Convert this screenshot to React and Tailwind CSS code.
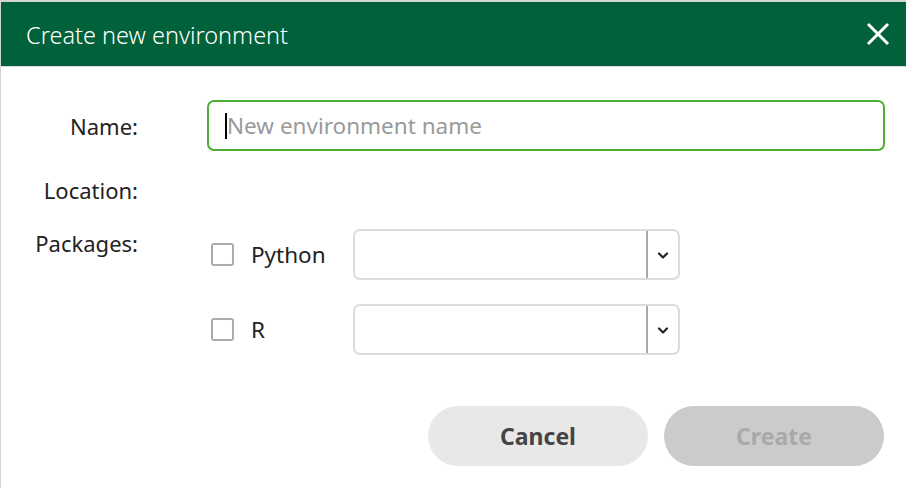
import React from 'react';

function Chevron() {
  return (
    <svg width="14" height="14" viewBox="0 0 14 14" fill="none">
      <path d="M3 5.5 L7 9.5 L11 5.5" stroke="#222" strokeWidth="2.2" strokeLinecap="round" strokeLinejoin="round" />
    </svg>
  );
}

function Select() {
  return (
    <div className="flex h-[51px] w-[327px] items-stretch rounded-[7px] border-2 border-[#dcdcdc] bg-white">
      <div className="flex-1" />
      <div className="w-[2px] bg-[#a9a9a9]" />
      <div className="flex w-[30px] items-center justify-center">
        <Chevron />
      </div>
    </div>
  );
}

function PackageRow({ label }) {
  return (
    <div className="flex h-[51px] items-center">
      <div className="ml-[4px] h-[23px] w-[23px] rounded-[3px] border-2 border-[#acacac] bg-white" />
      <span className="ml-[17px] w-[102px] text-[22.5px] text-[#222]">{label}</span>
      <Select />
    </div>
  );
}

export default function App() {
  return (
    <div
      className="flex h-[488px] w-[906px] flex-col overflow-hidden border-l border-t-2 border-[#d4d4d4] bg-white"
      style={{ fontFamily: '"Noto Sans", "Open Sans", sans-serif' }}
    >
      {/* header */}
      <div className="flex h-[65px] shrink-0 items-center justify-between border-b border-[#d9d9d9] bg-[#00613a] pl-[25px] pr-[16px]">
        <h1 className="pt-[3px] text-[23.5px] font-light text-white">Create new environment</h1>
        <svg width="24" height="24" viewBox="0 0 24 24" fill="none">
          <path d="M2 2 L22 22 M22 2 L2 22" stroke="white" strokeWidth="3" />
        </svg>
      </div>

      {/* form */}
      <div className="flex flex-1 flex-col pt-[33px]">
        <div className="flex h-[51px] items-center">
          <div className="w-[137px] pt-[1px] text-right text-[22px] text-[#222]">Name:</div>
          <div className="ml-[69px] flex h-[51px] w-[678px] items-center rounded-[7px] border-2 border-[#4caf34] pl-[16px]">
            <div className="h-[26px] w-[2px] bg-black" />
            <span className="pt-[1px] text-[22.5px] text-[#9a9a9a]">New environment name</span>
          </div>
        </div>

        <div className="flex h-[78px] items-center">
          <div className="w-[137px] text-right text-[22px] text-[#222]">Location:</div>
        </div>

        <div className="flex">
          <div className="w-[137px] text-right text-[22px] leading-[28px] text-[#222]">Packages:</div>
          <div className="ml-[69px] flex flex-col gap-[24px]">
            <PackageRow label="Python" />
            <PackageRow label="R" />
          </div>
        </div>

        <div className="mt-[51px] flex justify-end gap-[16px] pr-[22px]">
          <button className="h-[60px] w-[220px] rounded-full bg-[#e8e8e8] text-[23px] font-bold text-[#444]">Cancel</button>
          <button className="h-[60px] w-[220px] rounded-full bg-[#cbcbcb] text-[23px] font-bold text-[#a9a9a9]">Create</button>
        </div>
      </div>
    </div>
  );
}
